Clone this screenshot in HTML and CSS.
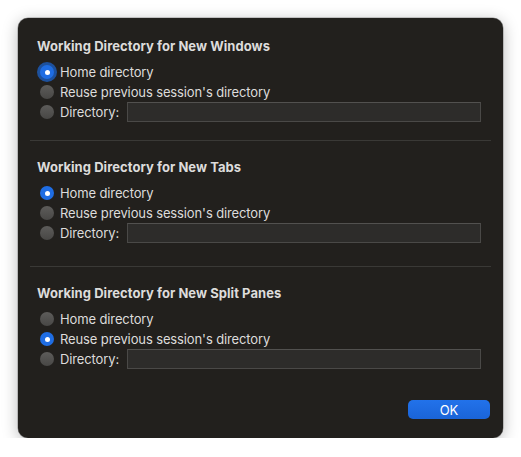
FILE: index.html
```html
<!DOCTYPE html>
<html>
<head>
<meta charset="utf-8">
<link rel="stylesheet" href="styles.css">
</head>
<body>
<div class="dialog">
  <section class="group g1">
    <h2 class="title">Working Directory for New Windows</h2>
    <div class="opt"><span class="radio on focus"></span><span class="lbl">Home directory</span></div>
    <div class="opt"><span class="radio"></span><span class="lbl">Reuse previous session's directory</span></div>
    <div class="opt"><span class="radio"></span><span class="lbl">Directory:</span><span class="field"></span></div>
  </section>
  <hr class="sep">
  <section class="group g2">
    <h2 class="title">Working Directory for New Tabs</h2>
    <div class="opt"><span class="radio on"></span><span class="lbl">Home directory</span></div>
    <div class="opt"><span class="radio"></span><span class="lbl">Reuse previous session's directory</span></div>
    <div class="opt"><span class="radio"></span><span class="lbl">Directory:</span><span class="field"></span></div>
  </section>
  <hr class="sep">
  <section class="group g3">
    <h2 class="title">Working Directory for New Split Panes</h2>
    <div class="opt"><span class="radio"></span><span class="lbl">Home directory</span></div>
    <div class="opt"><span class="radio on"></span><span class="lbl">Reuse previous session's directory</span></div>
    <div class="opt"><span class="radio"></span><span class="lbl">Directory:</span><span class="field"></span></div>
  </section>
  <div class="actions"><button class="ok">OK</button></div>
</div>
</body>
</html>
```
FILE: styles.css
```css
html, body {
  margin: 0;
  padding: 0;
  background: #ffffff;
}
body {
  padding: 18px 0 0 18px;
  font-family: Inter, "Liberation Sans", sans-serif;
  font-size: 13px;
  color: #dddcdb;
}
.dialog {
  width: 485px;
  height: 420px;
  box-sizing: border-box;
  background: #22201d;
  border-radius: 10px;
  box-shadow: 0 3px 16px rgba(0, 0, 0, 0.28), 0 0 0 0.5px rgba(0, 0, 0, 0.35);
  display: flex;
  flex-direction: column;
}
.group {
  padding: 0 22px 0 19px;
  display: flex;
  flex-direction: column;
}
.g1 { padding-top: 20px; padding-bottom: 18px; }
.g2 { padding-top: 18px; padding-bottom: 23px; }
.g3 { padding-top: 18px; }
.title {
  margin: 0 0 8px 0;
  font-size: 13px;
  line-height: 16px;
  font-weight: 700;
  color: #dddcdb;
  letter-spacing: 0.05px;
}
.opt {
  height: 20px;
  display: flex;
  align-items: center;
}
.radio {
  width: 14px;
  height: 14px;
  margin-left: 3px;
  margin-right: 6px;
  border-radius: 50%;
  background: linear-gradient(#5d5c5a, #484745);
  flex: none;
  position: relative;
}
.radio.on {
  background: #1f6de3;
}
.radio.on::after {
  content: "";
  position: absolute;
  left: 4.5px;
  top: 4.5px;
  width: 5px;
  height: 5px;
  border-radius: 50%;
  background: #ffffff;
}
.radio.focus {
  box-shadow: 0 0 0 3px rgba(28, 98, 200, 0.75);
}
.lbl {
  line-height: 16px;
  letter-spacing: -0.12px;
}
.field {
  flex: 1;
  height: 20px;
  margin-left: 8px;
  box-sizing: border-box;
  background: #2d2c2a;
  border: 1px solid #4a4947;
  border-top-color: #52514f;
}
.sep {
  margin: 0 12px;
  border: 0;
  height: 1px;
  background: #3a3936;
}
.actions {
  margin-top: auto;
  padding: 0 13px 19px 0;
  display: flex;
  justify-content: flex-end;
}
.ok {
  width: 82px;
  height: 19px;
  border: 0;
  border-radius: 5px;
  background: linear-gradient(#2272ea, #1a64d8);
  color: #ffffff;
  font-family: Inter, "Liberation Sans", sans-serif;
  font-size: 13px;
  padding: 0;
}
```
